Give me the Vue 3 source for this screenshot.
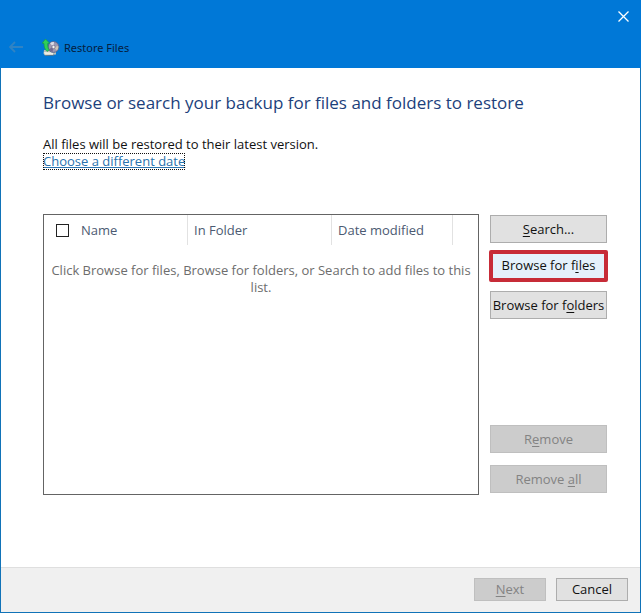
<script setup>
import { ref } from 'vue'

const allChecked = ref(false)
</script>

<template>
  <div class="window">
    <header class="titlebar">
      <div class="caption">
        <button class="close" type="button" aria-label="Close">
          <svg width="11" height="11" viewBox="0 0 11 11" aria-hidden="true">
            <path d="M.5.5l10 10M10.5.5l-10 10" fill="none" stroke="#fff" stroke-width="1.3" />
          </svg>
        </button>
      </div>
      <div class="nav">
        <button class="back" type="button" aria-label="Back" disabled>
          <svg width="14" height="12" viewBox="0 0 14 12" aria-hidden="true">
            <path d="M6 1L1 6l5 5M1 6h13" fill="none" stroke="#2f83c4" stroke-width="1.8" />
          </svg>
        </button>
        <svg class="app-icon" width="18" height="17" viewBox="0 0 18 17" aria-hidden="true">
          <path d="M2 11l8-1 4 2.500v3l-11 1-1.500-2z" fill="#b9bfba" />
          <path d="M2 13l9 .5v2.500H3z" fill="#eceee4" />
          <path d="M3 16.300h9" stroke="#6d7478" stroke-width=".8" />
          <circle cx="11.500" cy="8" r="5.400" fill="#9d98b2" stroke="#5c6b92" />
          <path d="M11.500 8L8 4.300a5 5 0 0 1 4-1.300z" fill="#dcdce6" />
          <path d="M11.500 8l4.800-1a5 5 0 0 1-1.300 4.500z" fill="#cfc6b4" />
          <path d="M11.500 8l-4.500 2a5 5 0 0 0 3.500 3z" fill="#736b91" />
          <circle cx="11.500" cy="8" r="1.700" fill="#f4f4f4" stroke="#716b86" stroke-width=".8" />
          <path d="M3.500 0L0 4.300l2 .2c0 3 .6 6 3.200 8l2-1.600C6 9.500 5.700 7.500 5.700 4.500l2-.3z" fill="#2fce58" stroke="#14934c" stroke-width=".6" />
        </svg>
        <span class="title">Restore Files</span>
      </div>
    </header>

    <main class="content">
      <h1>Browse or search your backup for files and folders to restore</h1>
      <p class="note">All files will be restored to their latest version.</p>
      <a class="date-link" href="#">Choose a different date</a>

      <div class="picker">
        <div class="list">
          <table>
            <thead>
              <tr>
                <th class="name" scope="col">
                  <label><input v-model="allChecked" type="checkbox" />Name</label>
                </th>
                <th class="folder" scope="col">In Folder</th>
                <th class="date" scope="col">Date modified</th>
                <th class="rest"></th>
              </tr>
            </thead>
            <tbody>
              <tr>
                <td colspan="4">Click Browse for files, Browse for folders, or Search to add files to this list.</td>
              </tr>
            </tbody>
          </table>
        </div>
        <div class="actions">
          <button class="btn" type="button"><u>S</u>earch...</button>
          <button class="btn marked" type="button">Browse for f<u>i</u>les</button>
          <button class="btn" type="button">Browse for f<u>o</u>lders</button>
          <button class="btn remove" type="button" disabled>R<u>e</u>move</button>
          <button class="btn" type="button" disabled>Remove <u>a</u>ll</button>
        </div>
      </div>
    </main>

    <footer class="footer">
      <button class="btn small" type="button" disabled><u>N</u>ext</button>
      <button class="btn small" type="button">Cancel</button>
    </footer>
  </div>
</template>

<style>
body {
  margin: 0;
}
</style>

<style scoped>
* {
  box-sizing: border-box;
}

.window {
  display: flex;
  flex-direction: column;
  min-height: 100vh;
  border: 1px solid #1173b8;
  border-top: 0;
  background: #fff;
  color: #111;
  font: 13px/17px "Open Sans", "Noto Sans", sans-serif;
  font-variant-ligatures: none;
}

button {
  font: inherit;
  font-variant-ligatures: none;
}

.titlebar {
  margin: 0 -1px;
  padding-bottom: 8px;
  background: #0078d7;
}

.caption {
  display: flex;
  justify-content: flex-end;
}

.close {
  display: grid;
  place-items: center;
  width: 36px;
  height: 32px;
  padding: 0;
  border: 0;
  background: none;
}

.nav {
  display: flex;
  align-items: center;
  height: 28px;
  padding: 2px 9px 0;
}

.back {
  display: flex;
  padding: 0;
  border: 0;
  background: none;
}

.app-icon {
  margin: 0 4px 0 19px;
}

.title {
  color: #06203f;
  font-family: "Noto Sans", sans-serif;
  font-size: 11px;
}

.content {
  flex: 1;
  padding: 23px 33px 71px 42px;
}

h1 {
  margin: 0;
  color: #1c3f7c;
  font-size: 17px;
  font-weight: 400;
  line-height: 24px;
}

.note {
  margin: 21px 0 0;
}

.date-link {
  display: inline-block;
  outline: 1px dotted #111;
  outline-offset: -1px;
  color: #2a73ae;
}

.picker {
  display: flex;
  gap: 11px;
  margin-top: 44px;
}

.list {
  flex: 1;
  min-height: 281px;
  border: 1px solid #646464;
}

table {
  width: 100%;
  border-collapse: separate;
  border-spacing: 0;
  table-layout: fixed;
}

th {
  height: 30px;
  padding: 0 6px;
  border-right: 1px solid #e2e2e2;
  color: #4c5a72;
  font-weight: 400;
  text-align: left;
}

th.name {
  width: 144px;
  padding-left: 12px;
}

th.folder {
  width: 144px;
}

th.date {
  width: 121px;
}

th.rest {
  padding: 0;
  border-right: 0;
}

label {
  display: flex;
  align-items: center;
  gap: 12px;
}

input {
  appearance: none;
  width: 13px;
  height: 13px;
  margin: 0;
  border: 1px solid #222;
  background: #fff;
}

input:checked {
  background: #222;
}

td {
  padding: 17px 4px;
  color: #6d6d6d;
  text-align: center;
}

.actions {
  display: flex;
  flex-direction: column;
  gap: 12px;
  width: 117px;
  padding: 1px 0 2px;
}

.btn {
  flex: none;
  height: 28px;
  padding: 0;
  border: 1px solid #adadad;
  background: #e1e1e1;
  color: #111;
  white-space: nowrap;
}

.btn:disabled {
  border-color: #bfbfbf;
  background: #ccc;
  color: #838383;
}

u {
  text-underline-offset: 2px;
}

.marked {
  height: 32px;
  margin: -5px -1px -3px;
  padding-bottom: 2px;
  border: 4px solid #c72c38;
  border-radius: 2px;
  background: #e5f1fb;
}

.remove {
  margin-top: auto;
}

.footer {
  display: flex;
  justify-content: flex-end;
  gap: 10px;
  padding: 10px 12px 11px;
  border-top: 1px solid #dfdfdf;
  background: #f0f0f0;
}

.small {
  width: 72px;
  height: 23px;
}
</style>
